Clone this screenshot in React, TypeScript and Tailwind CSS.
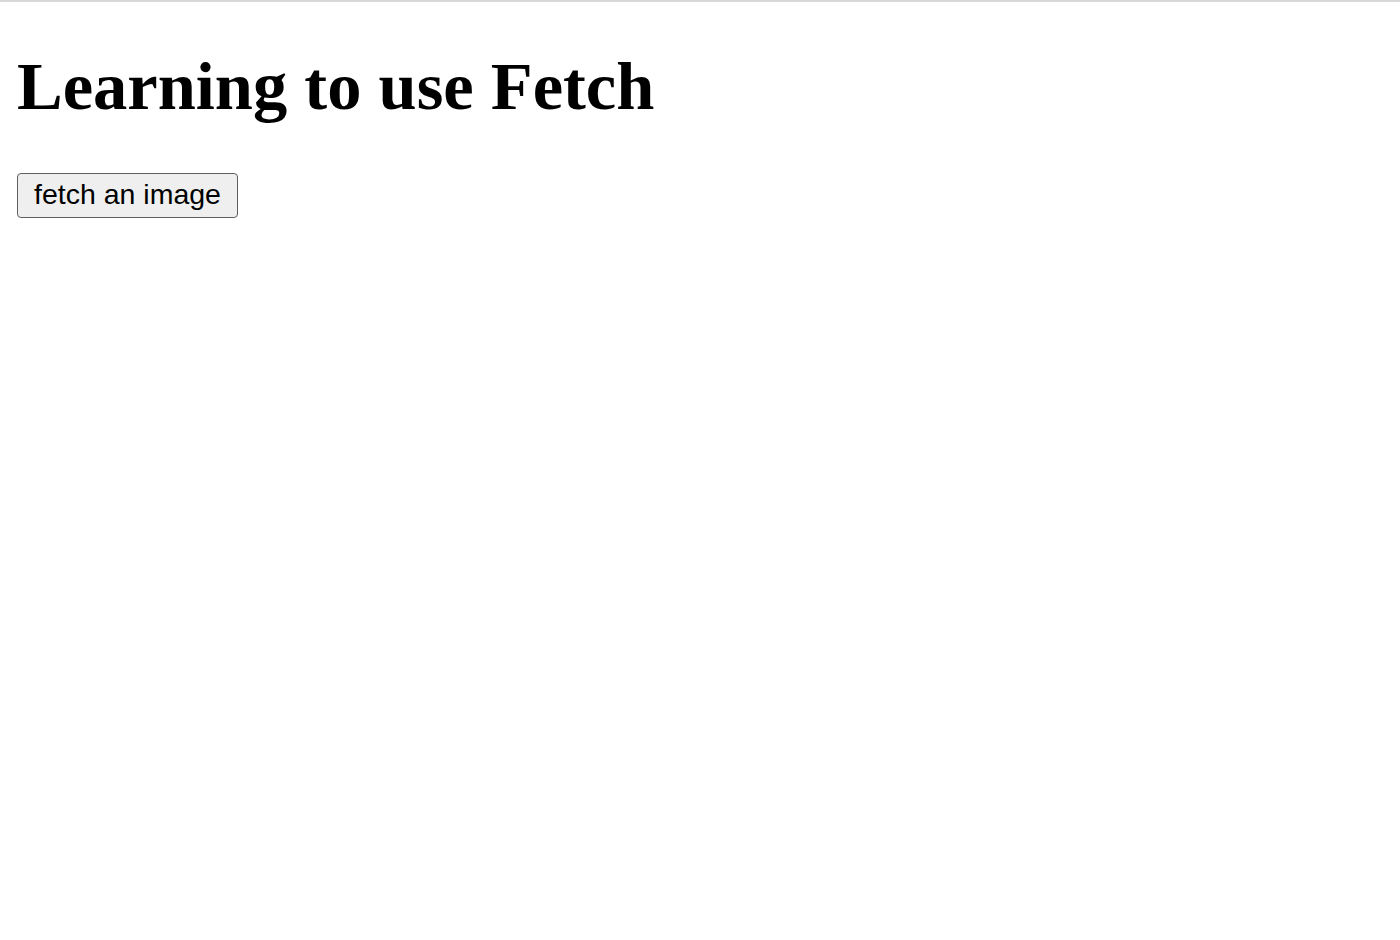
export default function App() {
  return (
    <div className="min-h-[940px] w-full bg-white border-t-2 border-[#d8d8d8] flex flex-col items-start pl-[17px]">
      <h1 className="mt-[46px] text-[68.5px] leading-[76px] font-bold text-black [font-family:'Liberation_Serif',serif]">
        Learning to use Fetch
      </h1>
      <button className="mt-[49px] w-[221px] h-[45px] flex items-center justify-center pb-[2px] bg-[#efefef] border-[1.5px] border-[#5e5e5e] rounded-[4px] text-[28.5px] text-black [font-family:'Liberation_Sans',Arial,sans-serif]">
        fetch an image
      </button>
    </div>
  );
}
